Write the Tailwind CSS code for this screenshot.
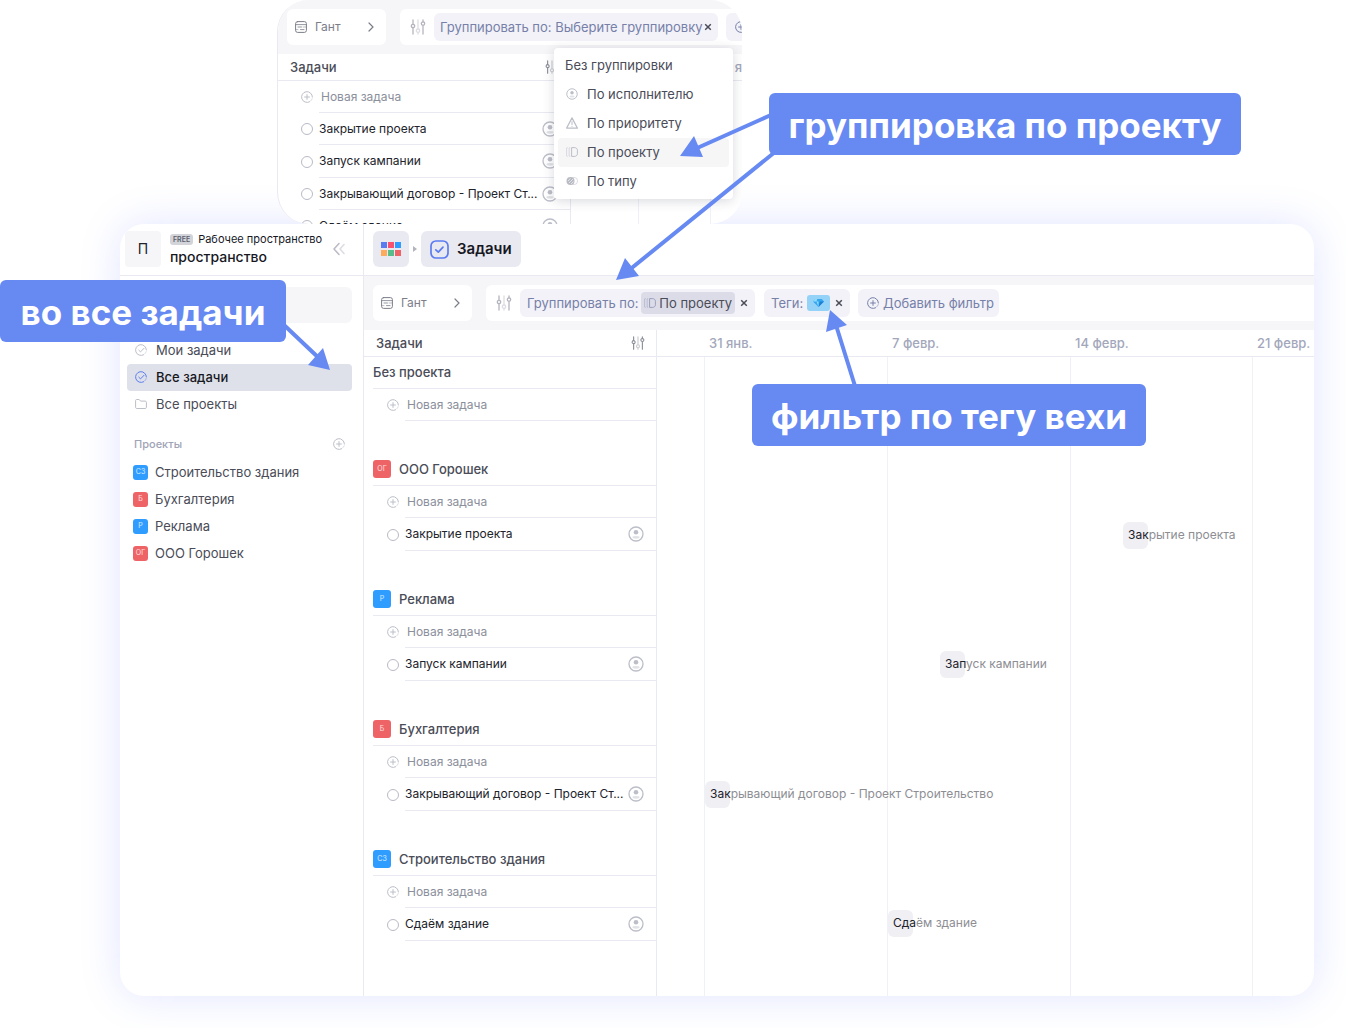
<!DOCTYPE html>
<html lang="ru">
<head>
<meta charset="utf-8">
<meta name="viewport" content="width=device-width, initial-scale=1">
<title>Задачи</title>
<script src="https://cdn.jsdelivr.net/npm/@tailwindcss/browser@4"></script>
</head>
<body class="relative overflow-x-hidden bg-white font-['Inter',sans-serif] text-[13px] leading-4 text-[#4a4c57]">

<svg class="hidden" aria-hidden="true">
  <symbol id="plus" viewBox="0 0 12 12" fill="none" stroke="currentColor" stroke-linecap="round"><path d="M8.6 10.8A5.4 5.4 0 1 1 11.4 6"/><path d="M11.2 7.6A5.4 5.4 0 0 1 9.6 10" opacity=".5"/><path d="M6 3.6v4.8M3.6 6h4.8"/></symbol>
  <symbol id="user" viewBox="0 0 16 16"><circle cx="8" cy="8" r="7" fill="none" stroke="currentColor" stroke-width="1.3"/><circle cx="8" cy="6.3" r="2.3" fill="currentColor"/><ellipse cx="8" cy="11.3" rx="3.6" ry="1.4" fill="currentColor" opacity=".45"/></symbol>
  <symbol id="sliders" viewBox="0 0 16 16" fill="none" stroke="currentColor" stroke-width="1.3" stroke-linecap="round"><path d="M3 1v4M3 9v6M13 1v2M13 7v8"/><circle cx="3" cy="7" r="1.7"/><circle cx="13" cy="4.6" r="1.7"/><g opacity=".45"><path d="M8 1v8.6M8 14v1"/><circle cx="8" cy="11.7" r="1.7"/></g></symbol>
  <symbol id="gantt" viewBox="0 0 12 12" fill="none" stroke="currentColor" stroke-linecap="round"><rect x=".6" y=".6" width="10.8" height="10.8" rx="2"/><path d="M1 3.6h10M3 6h3.500M5.500 8.600H9" opacity=".8"/><path d="M8 6h3M1 8.600h2" opacity=".5"/></symbol>
  <symbol id="chevron" viewBox="0 0 8 10" fill="none" stroke="currentColor" stroke-width="1.200" stroke-linecap="round"><path d="M2 1l4 4-4 4"/></symbol>
  <symbol id="close" viewBox="0 0 8 8" fill="none" stroke="currentColor" stroke-width="1.5"><path d="M1.200 1.200l5.600 5.600M6.800 1.200L1.200 6.800"/></symbol>
  <symbol id="check" viewBox="0 0 12 12" fill="none" stroke="currentColor" stroke-linecap="round" stroke-linejoin="round"><path d="M8.600 10.800A5.400 5.400 0 1 1 11.400 6"/><path d="M11.200 7.600A5.400 5.400 0 0 1 9.600 10" opacity=".5"/><path d="M3.800 6.200l1.700 1.700L9 4.300"/></symbol>
  <symbol id="folder" viewBox="0 0 12 12" fill="none" stroke="currentColor" stroke-linejoin="round"><path d="M.6 2.500c0-.6.4-1 1-1h2.600l1.300 1.600h4.700c.7 0 1.200.5 1.200 1.100v5.200c0 .6-.5 1.100-1.100 1.100H1.700c-.6 0-1.100-.5-1.100-1.100z"/></symbol>
  <symbol id="project" viewBox="0 0 12 12" fill="none" stroke="currentColor" stroke-linecap="round"><path d="M6 1.600h2.200c2 0 3.200 1 3.200 2.600v3.600c0 1.600-1.200 2.600-3.200 2.600H6z"/><path d="M3.800 1.600c-.6 0-.6.3-.6.700v7.400c0 .4 0 .7.600.7M1.200 1.600c-.6 0-.6.3-.6.700v7.400c0 .4 0 .7.600.7" opacity=".5"/></symbol>
  <symbol id="warn" viewBox="0 0 12 12" fill="none" stroke="currentColor" stroke-linejoin="round" stroke-linecap="round"><path stroke-width="1.200" d="M6 .9l5.400 10.200H.6z"/><path d="M6 4.600v3M6 9.300v.1"/></symbol>
  <symbol id="type" viewBox="0 0 12 12"><circle cx="8" cy="6" r="3.600" fill="none" stroke="currentColor" opacity=".4"/><circle cx="4.500" cy="6" r="4" fill="currentColor" opacity=".8"/><path d="M2 6l2.500-2.500M3 8l4-4M5 9l2.500-2.500" stroke="#fff" stroke-width=".6"/></symbol>
</svg>

<div class="flex min-h-screen flex-col pb-8 pl-[120px] pr-8">

  <!-- Grouping menu preview -->
  <section class="relative z-10 ml-[157px] h-56 w-[465px] shrink-0 overflow-hidden rounded-[32px] border-l border-[#e9e9f2] bg-white">
    <div class="flex h-[54px] items-center gap-[14px] bg-[#f6f6f8] pl-[9px]">
      <button class="flex h-9 w-[99px] shrink-0 items-center rounded-md bg-white px-2 pb-px text-xs text-[#7b7e89]"><svg class="mr-2 size-3"><use href="#gantt"/></svg>Гант<svg class="ml-auto mr-[3px] h-[10px] w-2"><use href="#chevron"/></svg></button>
      <div class="flex h-9 flex-1 items-center overflow-hidden rounded-l-md bg-white pl-[10px]">
        <svg class="mr-2 size-4 shrink-0 text-[#b4b4be]"><use href="#sliders"/></svg>
        <button class="mr-2 flex h-7 w-[284px] shrink-0 items-center justify-between whitespace-nowrap rounded-md bg-[#f2f2f8] px-[6px] text-[#7680a8]">Группировать по: Выберите группировку<svg class="size-2 shrink-0 text-[#4a4c57]"><use href="#close"/></svg></button>
        <button class="flex h-7 w-[141px] shrink-0 items-center rounded-md bg-[#f2f2f8] px-[9px] text-[#7680a8]" aria-label="Добавить фильтр"><svg class="size-3"><use href="#plus"/></svg></button>
      </div>
    </div>
    <div class="flex h-[27px] border-b border-[#e9e9f2] pb-px font-medium">
      <div class="flex w-[293px] items-center justify-between pl-3 pr-3"><span>Задачи</span><svg class="size-[14px] text-[#8b8d98]"><use href="#sliders"/></svg></div>
      <div class="flex flex-1 items-center justify-end text-[#a3a7bb]">я</div>
    </div>
    <div class="flex h-[150px]">
      <div class="w-[293px] border-r border-[#e9e9f2]">
        <button class="flex h-8 w-full items-center pl-[23px] text-xs text-[#8b8f9c]"><svg class="size-3 text-[#bcbec8]"><use href="#plus"/></svg><span class="ml-[6px] flex h-full flex-1 items-center border-b border-[#e9e9f2] pl-[2px]">Новая задача</span></button>
        <div class="flex h-8 items-center pl-[23px] text-xs text-[#22232b]"><input id="p1" type="checkbox" class="size-3 appearance-none rounded-full border border-[#b9bac6]"><div class="ml-[6px] flex h-full flex-1 items-center justify-between border-b border-[#e9e9f2] pr-3"><label for="p1">Закрытие проекта</label><svg class="size-4 text-[#bcbec8]"><use href="#user"/></svg></div></div>
        <div class="flex h-[33px] items-center pl-[23px] text-xs text-[#22232b]"><input id="p2" type="checkbox" class="size-3 appearance-none rounded-full border border-[#b9bac6]"><div class="ml-[6px] flex h-full flex-1 items-center justify-between border-b border-[#e9e9f2] pr-3"><label for="p2">Запуск кампании</label><svg class="size-4 text-[#bcbec8]"><use href="#user"/></svg></div></div>
        <div class="flex h-8 items-center pl-[23px] text-xs text-[#22232b]"><input id="p3" type="checkbox" class="size-3 appearance-none rounded-full border border-[#b9bac6]"><div class="ml-[6px] flex h-full flex-1 items-center justify-between border-b border-[#e9e9f2] pr-3"><label for="p3">Закрывающий договор - Проект Ст...</label><svg class="size-4 text-[#bcbec8]"><use href="#user"/></svg></div></div>
        <div class="flex h-8 items-center pl-[23px] text-xs text-[#22232b]"><input id="p4" type="checkbox" class="size-3 appearance-none rounded-full border border-[#b9bac6]"><div class="ml-[6px] flex h-full flex-1 items-center justify-between border-b border-[#e9e9f2] pr-3"><label for="p4">Сдаём здание</label><svg class="size-4 text-[#bcbec8]"><use href="#user"/></svg></div></div>
      </div>
      <div class="w-[68px] border-r border-[#f0f0f7]"></div>
      <div class="w-[72px] border-r border-[#f0f0f7]"></div>
    </div>

    <div role="menu" class="absolute left-[276px] top-12 flex w-[179px] flex-col rounded bg-white px-1 py-[3px] shadow-[0_2px_12px_rgba(40,42,70,0.18)]">
      <button role="menuitem" class="flex h-[29px] items-center rounded px-[7px] pb-[2px]">Без группировки</button>
      <button role="menuitem" class="flex h-[29px] items-center gap-[9px] rounded px-2 pb-[2px]"><svg class="size-3 text-[#bcbec8]"><use href="#user"/></svg>По исполнителю</button>
      <button role="menuitem" class="flex h-[29px] items-center gap-[9px] rounded px-2 pb-[2px]"><svg class="size-3 text-[#bcbec8]"><use href="#warn"/></svg>По приоритету</button>
      <button role="menuitem" class="flex h-[29px] items-center gap-[9px] rounded bg-[#f6f6f7] px-2 pb-[2px]"><svg class="size-3 text-[#bcbec8]"><use href="#project"/></svg>По проекту</button>
      <button role="menuitem" class="flex h-[29px] items-center gap-[9px] rounded px-2 pb-[2px]"><svg class="size-3 text-[#a9abb6]"><use href="#type"/></svg>По типу</button>
    </div>
  </section>

  <!-- Application window -->
  <div class="flex flex-1 overflow-hidden rounded-3xl bg-white shadow-[0_0_40px_rgba(103,125,255,0.2)]">

    <aside class="w-[244px] shrink-0 border-r border-[#e9e9f2]">
      <div class="flex h-[52px] items-center border-b border-[#e9e9f2] pb-px pl-[5px] pr-[18px]">
        <div class="flex size-9 items-center justify-center rounded bg-[#f6f6f8] text-sm text-[#22232b]">П</div>
        <div class="ml-[9px] flex flex-col text-[#17181f]">
          <div class="flex items-center gap-[5px] whitespace-nowrap text-[11px]"><span class="rounded-[3px] bg-[#d3d4da] px-[3px] text-[7px] font-semibold leading-[11px] text-[#5c5f6b]">FREE</span>Рабочее пространство</div>
          <div class="text-sm font-medium leading-5">пространство</div>
        </div>
        <button class="ml-auto" aria-label="Свернуть"><svg class="h-[14px] w-3" viewBox="0 0 12 14" fill="none" stroke="#b9bac6" stroke-width="1.500" stroke-linecap="round" stroke-linejoin="round"><path d="M6 1.500L1 7l5 5.500"/><path d="M11 2.500L7 7l4 4.500" opacity=".5"/></svg></button>
      </div>
      <div class="pl-[7px] pr-[11px] pt-[11px]">
        <input type="search" aria-label="Поиск" class="block h-9 w-full rounded-md bg-[#f6f6f8] outline-none">
        <nav class="mt-[14px]">
          <a href="#" class="flex h-[27px] items-center gap-[9px] rounded px-2 pb-px"><svg class="size-3 text-[#bcbec8]"><use href="#check"/></svg>Мои задачи</a>
          <a href="#" class="flex h-[27px] items-center gap-[9px] rounded bg-[#dfe1ea] px-2 pb-px font-medium text-[#17181f]"><svg class="size-3 text-[#5b7cf0]"><use href="#check"/></svg>Все задачи</a>
          <a href="#" class="flex h-[27px] items-center gap-[9px] rounded px-2 pb-px"><svg class="size-3 text-[#bcbec8]"><use href="#folder"/></svg>Все проекты</a>
        </nav>
        <div class="mt-[13px] flex h-[26px] items-center justify-between px-[7px] text-[11px] font-medium text-[#a0a4b6]">Проекты<button aria-label="Новый проект"><svg class="size-3 text-[#bcbec8]"><use href="#plus"/></svg></button></div>
        <div class="pt-[2px]">
          <a href="#" class="flex h-[27px] items-center gap-[7px] px-[6px] pb-px"><span class="flex size-[15px] items-center justify-center rounded-[3px] bg-[#2f9dff] text-[7px] text-white/80">СЗ</span>Строительство здания</a>
          <a href="#" class="flex h-[27px] items-center gap-[7px] px-[6px] pb-px"><span class="flex size-[15px] items-center justify-center rounded-[3px] bg-[#ee6366] text-[7px] text-white/80">Б</span>Бухгалтерия</a>
          <a href="#" class="flex h-[27px] items-center gap-[7px] px-[6px] pb-px"><span class="flex size-[15px] items-center justify-center rounded-[3px] bg-[#2f9dff] text-[7px] text-white/80">Р</span>Реклама</a>
          <a href="#" class="flex h-[27px] items-center gap-[7px] px-[6px] pb-px"><span class="flex size-[15px] items-center justify-center rounded-[3px] bg-[#ee6366] text-[7px] text-white/80">ОГ</span>ООО Горошек</a>
        </div>
      </div>
    </aside>

    <main class="flex min-w-0 flex-1 flex-col">
      <header class="flex h-[52px] items-center border-b border-[#e9e9f2] pb-px pl-[9px]">
        <button aria-label="Разделы" class="flex size-9 items-center justify-center rounded-md bg-[#e9e9f2]"><svg class="h-[14px] w-5" viewBox="0 0 20 14"><path fill="#5b7cf0" d="M0 0h6v6H0z"/><path fill="#f9526e" d="M7 0h6v6H7z"/><path fill="#2f9dff" d="M14 0h6v6h-6z"/><path fill="#fdab5d" d="M0 8h6v6H0z"/><path fill="#58bd8d" d="M7 8h6v6H7z"/><path fill="#ee6366" d="M14 8h6v6h-6z"/></svg></button>
        <svg class="mx-1 h-[6px] w-1" viewBox="0 0 4 6"><path fill="#b4b4be" d="M0 0l4 3-4 3z"/></svg>
        <button class="flex h-9 w-[100px] items-center gap-2 rounded-md bg-[#e9e9f2] pl-[9px] text-[15px] font-semibold text-[#17181f]"><svg class="size-[19px] shrink-0" viewBox="0 0 19 19" fill="none" stroke="#5b7cf0" stroke-width="1.700" stroke-linecap="round" stroke-linejoin="round"><rect x="1" y="1" width="17" height="17" rx="5"/><path d="M5.800 9.800l2.500 2.400 4.700-5"/></svg>Задачи</button>
      </header>

      <div class="flex h-[54px] items-center gap-[14px] bg-[#f6f6f8] pl-[9px]">
        <button class="flex h-9 w-[99px] shrink-0 items-center rounded-md bg-white px-2 pb-px text-xs text-[#7b7e89]"><svg class="mr-2 size-3"><use href="#gantt"/></svg>Гант<svg class="ml-auto mr-[3px] h-[10px] w-2"><use href="#chevron"/></svg></button>
        <div class="flex h-9 flex-1 items-center overflow-hidden whitespace-nowrap rounded-l-md bg-white pl-[10px] text-[#7680a8]">
          <svg class="mr-2 size-4 shrink-0 text-[#b4b4be]"><use href="#sliders"/></svg>
          <button class="mr-[9px] flex h-7 w-[235px] shrink-0 items-center rounded-md bg-[#f2f2f8] px-[7px]">Группировать по:<span class="ml-auto flex h-[22px] items-center gap-[3px] rounded bg-[#dcdce9] px-[3px] pb-px text-[#4a4c57]"><svg class="size-3 text-[#9a9fbb]"><use href="#project"/></svg>По проекту</span><svg class="ml-[5px] size-2 shrink-0 text-[#4a4c57]"><use href="#close"/></svg></button>
          <button class="mr-2 flex h-7 w-[86px] shrink-0 items-center rounded-md bg-[#f2f2f8] px-[7px]">Теги:<span class="ml-auto flex h-4 w-[23px] items-center justify-center rounded-[3px] bg-[#95d2f8]"><svg class="h-2 w-[11px]" viewBox="0 0 11 8"><path fill="#36a6ee" d="M2.200 0h6.600L11 2.600 5.500 8 0 2.600z"/><path fill="#8fdcff" d="M2.200 0h2L3.500 2.600H0zM5.500 8L3.500 2.600h2z"/><path fill="#1d80d4" d="M6.800 2.600H11L5.500 8z"/></svg></span><svg class="ml-[5px] size-2 text-[#4a4c57]"><use href="#close"/></svg></button>
          <button class="flex h-7 w-[141px] shrink-0 items-center gap-1 rounded-md bg-[#f2f2f8] px-[9px]"><svg class="size-3 shrink-0"><use href="#plus"/></svg>Добавить фильтр</button>
        </div>
      </div>

      <div class="flex flex-1">
        <section class="w-[293px] shrink-0 border-r border-[#e9e9f2]">
          <div class="flex h-[27px] items-center justify-between border-b border-[#e9e9f2] pb-px pl-3 pr-[11px] font-medium">Задачи<button aria-label="Настроить столбцы"><svg class="size-[14px] text-[#8b8d98]"><use href="#sliders"/></svg></button></div>

          <h2 class="ml-[9px] flex h-8 items-center border-b border-[#e9e9f2] pb-[2px] font-medium">Без проекта</h2>
          <button class="flex h-8 w-full items-center pl-[23px] text-xs text-[#8b8f9c]"><svg class="size-3 text-[#bcbec8]"><use href="#plus"/></svg><span class="ml-[6px] flex h-full flex-1 items-center border-b border-[#e9e9f2] pl-[2px]">Новая задача</span></button>

          <h2 class="ml-[9px] mt-[33px] flex h-8 items-center gap-2 border-b border-[#e9e9f2] pb-[2px] font-medium"><span class="flex size-[18px] items-center justify-center rounded-[3px] bg-[#ee6366] text-[7px] font-normal text-white/80">ОГ</span>ООО Горошек</h2>
          <button class="flex h-8 w-full items-center pl-[23px] text-xs text-[#8b8f9c]"><svg class="size-3 text-[#bcbec8]"><use href="#plus"/></svg><span class="ml-[6px] flex h-full flex-1 items-center border-b border-[#e9e9f2] pl-[2px]">Новая задача</span></button>
          <div class="flex h-[33px] items-center pl-[23px] text-xs text-[#22232b]"><input id="t1" type="checkbox" class="size-3 appearance-none rounded-full border border-[#b9bac6]"><div class="ml-[6px] flex h-full flex-1 items-center justify-between border-b border-[#e9e9f2] pr-3"><label for="t1">Закрытие проекта</label><svg class="size-4 text-[#bcbec8]"><use href="#user"/></svg></div></div>

          <h2 class="ml-[9px] mt-[33px] flex h-8 items-center gap-2 border-b border-[#e9e9f2] pb-[2px] font-medium"><span class="flex size-[18px] items-center justify-center rounded-[3px] bg-[#2f9dff] text-[7px] font-normal text-white/80">Р</span>Реклама</h2>
          <button class="flex h-8 w-full items-center pl-[23px] text-xs text-[#8b8f9c]"><svg class="size-3 text-[#bcbec8]"><use href="#plus"/></svg><span class="ml-[6px] flex h-full flex-1 items-center border-b border-[#e9e9f2] pl-[2px]">Новая задача</span></button>
          <div class="flex h-[33px] items-center pl-[23px] text-xs text-[#22232b]"><input id="t2" type="checkbox" class="size-3 appearance-none rounded-full border border-[#b9bac6]"><div class="ml-[6px] flex h-full flex-1 items-center justify-between border-b border-[#e9e9f2] pr-3"><label for="t2">Запуск кампании</label><svg class="size-4 text-[#bcbec8]"><use href="#user"/></svg></div></div>

          <h2 class="ml-[9px] mt-[33px] flex h-8 items-center gap-2 border-b border-[#e9e9f2] pb-[2px] font-medium"><span class="flex size-[18px] items-center justify-center rounded-[3px] bg-[#ee6366] text-[7px] font-normal text-white/80">Б</span>Бухгалтерия</h2>
          <button class="flex h-8 w-full items-center pl-[23px] text-xs text-[#8b8f9c]"><svg class="size-3 text-[#bcbec8]"><use href="#plus"/></svg><span class="ml-[6px] flex h-full flex-1 items-center border-b border-[#e9e9f2] pl-[2px]">Новая задача</span></button>
          <div class="flex h-[33px] items-center pl-[23px] text-xs text-[#22232b]"><input id="t3" type="checkbox" class="size-3 appearance-none rounded-full border border-[#b9bac6]"><div class="ml-[6px] flex h-full flex-1 items-center justify-between border-b border-[#e9e9f2] pr-3"><label for="t3">Закрывающий договор - Проект Ст...</label><svg class="size-4 text-[#bcbec8]"><use href="#user"/></svg></div></div>

          <h2 class="ml-[9px] mt-[33px] flex h-8 items-center gap-2 border-b border-[#e9e9f2] pb-[2px] font-medium"><span class="flex size-[18px] items-center justify-center rounded-[3px] bg-[#2f9dff] text-[7px] font-normal text-white/80">СЗ</span>Строительство здания</h2>
          <button class="flex h-8 w-full items-center pl-[23px] text-xs text-[#8b8f9c]"><svg class="size-3 text-[#bcbec8]"><use href="#plus"/></svg><span class="ml-[6px] flex h-full flex-1 items-center border-b border-[#e9e9f2] pl-[2px]">Новая задача</span></button>
          <div class="flex h-[33px] items-center pl-[23px] text-xs text-[#22232b]"><input id="t4" type="checkbox" class="size-3 appearance-none rounded-full border border-[#b9bac6]"><div class="ml-[6px] flex h-full flex-1 items-center justify-between border-b border-[#e9e9f2] pr-3"><label for="t4">Сдаём здание</label><svg class="size-4 text-[#bcbec8]"><use href="#user"/></svg></div></div>
        </section>

        <!-- Timeline: one week is 183px wide -->
        <section class="flex min-w-0 flex-1 flex-col overflow-hidden">
          <div class="flex h-[27px] shrink-0 items-center border-b border-[#e9e9f2] pb-px pl-[47px] font-medium text-[#a3a7bb]">
            <span class="w-[183px] shrink-0 pl-[5px]">31 янв.</span><span class="w-[183px] shrink-0 pl-[5px]">7 февр.</span><span class="w-[182px] shrink-0 pl-[5px]">14 февр.</span><span class="shrink-0 whitespace-nowrap pl-[5px]">21 февр.</span>
          </div>
          <div class="relative flex flex-1 pl-[47px] text-xs">
            <div class="w-[183px] shrink-0 border-l border-[#f0f0f7]"></div><div class="w-[183px] shrink-0 border-l border-[#f0f0f7]"></div><div class="w-[182px] shrink-0 border-l border-[#f0f0f7]"></div><div class="flex-1 border-l border-[#f0f0f7]"></div>
            <div class="absolute flex h-[27px] w-[25px] items-center whitespace-nowrap rounded-md bg-[#efeff4] pb-px pl-[5px] text-[#8d8e94]" style="left:466px;top:165px"><span><span class="text-[#22232b]">Зак</span>рытие проекта</span></div>
            <div class="absolute flex h-[27px] w-[25px] items-center whitespace-nowrap rounded-md bg-[#efeff4] pb-px pl-[5px] text-[#8d8e94]" style="left:283px;top:294px"><span><span class="text-[#22232b]">Зап</span>уск кампании</span></div>
            <div class="absolute flex h-[27px] w-[25px] items-center whitespace-nowrap rounded-md bg-[#efeff4] pb-px pl-[5px] text-[#8d8e94]" style="left:48px;top:424px"><span><span class="text-[#22232b]">Зак</span>рывающий договор - Проект Строительство</span></div>
            <div class="absolute flex h-[27px] w-[25px] items-center whitespace-nowrap rounded-md bg-[#efeff4] pb-px pl-[5px] text-[#8d8e94]" style="left:231px;top:553px"><span><span class="text-[#22232b]">Сда</span>ём здание</span></div>
          </div>
        </section>
      </div>
    </main>
  </div>
</div>

<!-- Callouts -->
<svg class="pointer-events-none absolute left-0 top-0 z-20 h-[460px] w-[1346px]" viewBox="0 0 1346 460" fill="#6789f2" stroke="#6789f2" stroke-width="4" aria-hidden="true">
  <path d="M771 115L695 149M775 152L628 271M284 325L322 361M855 386L835 322"/>
  <g stroke="none"><path d="M680 156l14-20 9 21zM616 280l9-22 14 18zM330 370l-7-22-15 17zM830 310l17 15-21 7z"/></g>
</svg>
<div class="absolute left-0 top-[280px] z-20 flex h-[62px] w-[286px] items-center justify-center whitespace-nowrap rounded-md bg-[#6789f2] pt-[2px] text-[35px] font-bold text-white">во все задачи</div>
<div class="absolute left-[769px] top-[93px] z-20 flex h-[62px] w-[472px] items-center justify-center whitespace-nowrap rounded-md bg-[#6789f2] pt-[2px] text-[35px] font-bold text-white">группировка по проекту</div>
<div class="absolute left-[752px] top-[384px] z-20 flex h-[62px] w-[394px] items-center justify-center whitespace-nowrap rounded-md bg-[#6789f2] pt-[2px] text-[35px] font-bold text-white">фильтр по тегу вехи</div>

</body>
</html>
